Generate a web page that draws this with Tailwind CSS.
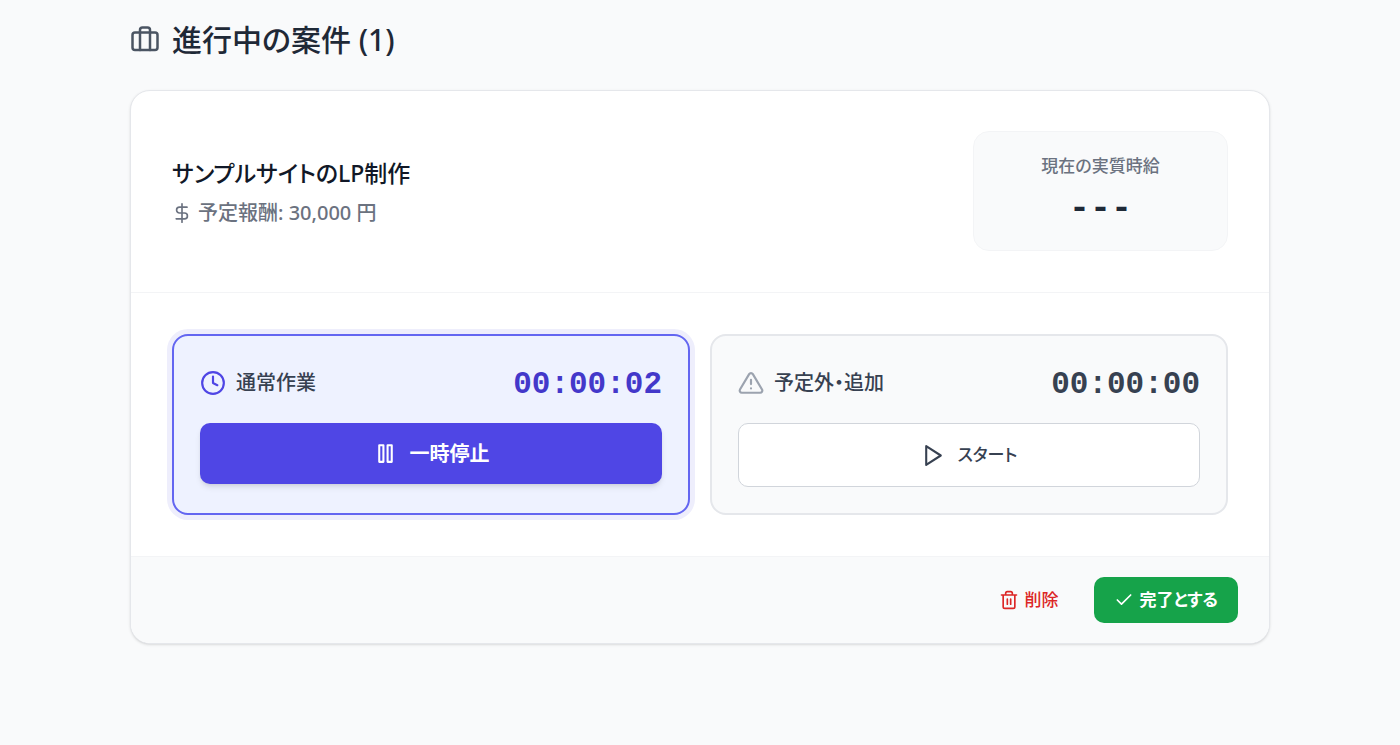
<!DOCTYPE html>
<html lang="ja">
<head>
<meta charset="utf-8">
<meta name="viewport" content="width=device-width, initial-scale=1">
<title>進行中の案件</title>
<script src="https://cdn.jsdelivr.net/npm/@tailwindcss/browser@4"></script>
</head>
<body class="min-h-screen bg-[#f9fafb] font-['Noto_Sans','Noto_Sans_CJK_JP',sans-serif] font-medium text-[#1f2937] [font-feature-settings:'palt']">
<main class="mx-auto w-full max-w-[1180px] px-5 pt-5 pb-10">
  <h1 class="mb-[30px] flex items-center gap-3 text-[30px] leading-10 font-medium">
    <svg class="size-[30px] shrink-0 text-[#4b5563]" viewBox="0 0 24 24" fill="none" stroke="currentColor" stroke-width="2" stroke-linecap="round" stroke-linejoin="round" aria-hidden="true"><rect x="2" y="6" width="20" height="14" rx="2"/><path d="M16 20V4a2 2 0 0 0-2-2h-4a2 2 0 0 0-2 2v16"/></svg>
    進行中の案件 (1)
  </h1>

  <article class="overflow-hidden rounded-[20px] border border-[#e5e7eb] bg-white shadow-sm">
    <header class="flex flex-wrap items-center justify-between gap-5 border-b border-[#f3f4f6] px-[41px] pt-10 pb-[41px]">
      <div class="pt-1">
        <h2 class="text-[23px] leading-9 font-medium text-[#111827]">サンプルサイトのLP制作</h2>
        <p class="mt-1 flex items-center gap-[6px] text-xl leading-9 text-[#6b7280]">
          <svg class="size-5 shrink-0" viewBox="0 0 24 24" fill="none" stroke="currentColor" stroke-width="2" stroke-linecap="round" stroke-linejoin="round" aria-hidden="true"><path d="M12 1v22M18 5H9a3.5 3.5 0 0 0 0 7h6a3.5 3.5 0 0 1 0 7H5"/></svg>
          予定報酬: 30,000 円
        </p>
      </div>
      <div class="w-[255px] rounded-2xl border border-[#f3f4f6] bg-[#f9fafb] px-5 py-5 text-center">
        <p class="text-[17px] leading-7 text-[#6b7280]">現在の実質時給</p>
        <p class="mt-2 font-['Liberation_Mono',monospace] text-[35px] leading-[42px] font-bold">---</p>
      </div>
    </header>

    <div class="grid gap-5 p-[41px] md:grid-cols-2">
      <section class="rounded-2xl border-2 border-[#6366f1] bg-[#eef2ff] p-[26px] ring-[5px] ring-[#eeeefc]">
        <div class="mb-5 flex items-center justify-between">
          <h3 class="flex items-center gap-[10px] text-xl text-[#374151]">
            <svg class="size-[26px] shrink-0 text-[#4f46e5]" viewBox="0 0 24 24" fill="none" stroke="currentColor" stroke-width="2" stroke-linecap="round" stroke-linejoin="round" aria-hidden="true"><circle cx="12" cy="12" r="10"/><path d="M12 6v6l4 2"/></svg>
            通常作業
          </h3>
          <span class="pt-1 font-['Liberation_Mono',monospace] text-[31px] leading-[37px] font-bold text-[#4338ca]">00:00:02</span>
        </div>
        <button type="button" class="flex h-[61px] w-full items-center justify-center gap-3 rounded-[10px] bg-[#4f46e5] text-xl font-semibold text-white shadow-md">
          <svg class="size-[25px]" viewBox="0 0 24 24" fill="none" stroke="currentColor" stroke-width="2" stroke-linecap="round" stroke-linejoin="round" aria-hidden="true"><path d="M6 4h4v16H6zM14 4h4v16h-4z"/></svg>
          一時停止
        </button>
      </section>

      <section class="rounded-2xl border-2 border-[#e5e7eb] bg-[#f9fafb] p-[26px]">
        <div class="mb-5 flex items-center justify-between">
          <h3 class="flex items-center gap-[10px] text-xl text-[#374151]">
            <svg class="size-[26px] shrink-0 text-[#9ca3af]" viewBox="0 0 24 24" fill="none" stroke="currentColor" stroke-width="2" stroke-linecap="round" stroke-linejoin="round" aria-hidden="true"><path d="M10.29 3.86 1.82 18a2 2 0 0 0 1.71 3h16.94a2 2 0 0 0 1.71-3L13.71 3.86a2 2 0 0 0-3.42 0zM12 9v4M12 17h.01"/></svg>
            予定外・追加
          </h3>
          <span class="pt-1 font-['Liberation_Mono',monospace] text-[31px] leading-[37px] font-bold text-[#374151]">00:00:00</span>
        </div>
        <button type="button" class="flex h-16 w-full items-center justify-center gap-3 rounded-[10px] border border-[#d1d5db] bg-white text-[17px] text-[#374151]">
          <svg class="size-[25px]" viewBox="0 0 24 24" fill="none" stroke="currentColor" stroke-width="2" stroke-linecap="round" stroke-linejoin="round" aria-hidden="true"><path d="M5 3l14 9-14 9z"/></svg>
          スタート
        </button>
      </section>
    </div>

    <footer class="flex items-center justify-end gap-4 border-t border-[#f3f4f6] bg-[#f9fafb] py-5 pr-[31px] pl-5 text-[17px]">
      <button type="button" class="flex h-[46px] items-center gap-[5px] px-5 text-[#dc2626]">
        <svg class="size-5" viewBox="0 0 24 24" fill="none" stroke="currentColor" stroke-width="2" stroke-linecap="round" stroke-linejoin="round" aria-hidden="true"><path d="M3 6h18M19 6v14a2 2 0 0 1-2 2H7a2 2 0 0 1-2-2V6m3 0V4a2 2 0 0 1 2-2h4a2 2 0 0 1 2 2v2M10 11v6M14 11v6"/></svg>
        削除
      </button>
      <button type="button" class="flex h-[46px] items-center gap-[5px] rounded-[10px] bg-[#16a34a] px-5 font-semibold text-white">
        <svg class="size-5" viewBox="0 0 24 24" fill="none" stroke="currentColor" stroke-width="2" stroke-linecap="round" stroke-linejoin="round" aria-hidden="true"><path d="M20 6 9 17l-5-5"/></svg>
        完了とする
      </button>
    </footer>
  </article>
</main>
</body>
</html>
